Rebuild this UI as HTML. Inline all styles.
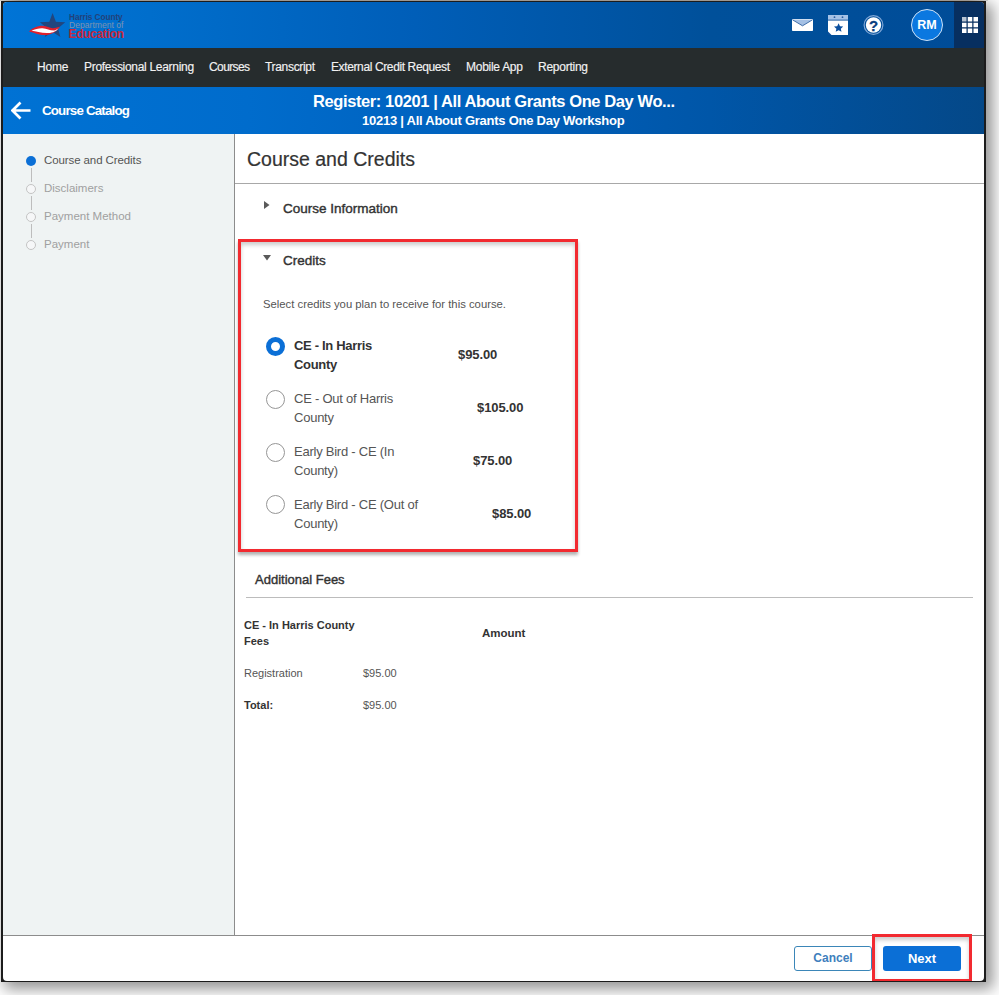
<!DOCTYPE html>
<html><head><meta charset="utf-8">
<style>
*{margin:0;padding:0;box-sizing:border-box}
html,body{width:999px;height:995px;overflow:hidden;background:#fff;font-family:"Liberation Sans",sans-serif}
#frame{position:absolute;left:1px;top:1px;width:985px;height:981px;background:#1c1c1c;box-shadow:5px 5px 14px 2px rgba(0,0,0,.42)}
#clip{position:absolute;left:3px;top:2px;width:981px;height:979px;border-radius:4px;overflow:hidden;background:#fff}
#inner{position:absolute;left:-3px;top:-2px;width:999px;height:995px}
.a{position:absolute}
.t{position:absolute;white-space:nowrap;line-height:1}
#hdr{left:3px;top:2px;width:981px;height:46px;background:linear-gradient(to right,#0074d6 0%,#006ecc 15%,#005eb8 42%,#00509a 72%,#004c98 100%)}
#apps{left:954px;top:2px;width:30px;height:46px;background:#072f60}
#nav{left:3px;top:48px;width:981px;height:39px;background:#262c2d}
.nav{top:61px;font-size:12px;color:#f2f2f2;-webkit-text-stroke:0.15px #f2f2f2}
#bar{left:3px;top:87px;width:981px;height:47px;background:linear-gradient(to right,#0072d4 0%,#006ccc 25%,#0060bc 50%,#0056a8 72%,#044888 100%)}
#side{left:3px;top:134px;width:232px;height:801px;background:#eff3f3;border-right:1px solid #8c8c8c}
.step{font-size:11.5px;color:#a0a0a0}
.dot{width:10px;height:10px;border-radius:50%;border:1px solid #c4c4c4;background:#f6f7f8;left:26px}
.vl{left:31px;width:1px;background:#bdbdbd}
.radio{width:19px;height:19px;border-radius:50%;border:1px solid #969696;left:266px;background:#fff}
.lbl{font-size:13px;color:#555;line-height:19px;letter-spacing:-0.24px}
.price{font-size:13px;font-weight:bold;color:#333;letter-spacing:-0.1px}
</style></head><body>
<div class="a" style="left:0;top:0;width:988px;height:1px;background:linear-gradient(to right,#d8d4d0,#b8b0a8 2%,#b8b0a8 98%,#e0e0e0)"></div>
<div id="frame"></div>
<div id="clip"><div id="inner">

<!-- header -->
<div id="hdr" class="a"></div>
<div id="apps" class="a"></div>
<svg class="a" style="left:962px;top:17px" width="16" height="16" viewBox="0 0 16 16">
  <g fill="#fff"><rect x="0" y="0" width="4.5" height="4.5" fill="#b8c4d2"/><rect x="5.75" y="0" width="4.5" height="4.5"/><rect x="11.5" y="0" width="4.5" height="4.5"/>
  <rect x="0" y="5.75" width="4.5" height="4.5"/><rect x="5.75" y="5.75" width="4.5" height="4.5"/><rect x="11.5" y="5.75" width="4.5" height="4.5"/>
  <rect x="0" y="11.5" width="4.5" height="4.5"/><rect x="5.75" y="11.5" width="4.5" height="4.5"/><rect x="11.5" y="11.5" width="4.5" height="4.5"/></g>
</svg>
<!-- avatar -->
<div class="a" style="left:911px;top:9px;width:32px;height:32px;border-radius:50%;background:#0b78e0;border:1.5px solid #cfe3f7"></div>
<div class="t" style="left:916px;top:19px;width:22px;text-align:center;font-size:12.5px;font-weight:bold;color:#fff">RM</div>
<!-- mail -->
<svg class="a" style="left:792px;top:19px" width="21" height="12" viewBox="0 0 21 12">
  <rect x="0" y="0" width="21" height="12" rx="0.8" fill="#fff"/>
  <path d="M0.5 0.5 L20.5 0.5 L10.5 6.8 Z" fill="#a4c0e4"/>
  <path d="M0.5 0.8 L10.5 6.8 L20.5 0.8" fill="none" stroke="#2a5d9f" stroke-width="0.9"/>
</svg>
<!-- calendar -->
<svg class="a" style="left:828px;top:15px" width="20" height="20" viewBox="0 0 20 20">
  <rect x="0" y="0" width="20" height="4.8" fill="#a6c2e6"/>
  <rect x="0" y="4.8" width="20" height="0.8" fill="#3a6aa8"/>
  <rect x="0" y="5.6" width="20" height="14.4" fill="#fff"/>
  <circle cx="6.5" cy="2.2" r="0.9" fill="#2a5d9f"/><circle cx="14.5" cy="2.2" r="0.9" fill="#2a5d9f"/>
  <path d="M10.6 8.3 L12 11.3 L15.2 11.6 L12.8 13.7 L13.5 16.8 L10.6 15.2 L7.7 16.8 L8.4 13.7 L6 11.6 L9.2 11.3 Z" fill="#0b4f9e"/>
  <path d="M0 16.5 L3.5 20 L0 20 Z" fill="#0a4e9a"/>
</svg>
<!-- help -->
<svg class="a" style="left:863px;top:15px" width="21" height="21" viewBox="0 0 21 21">
  <circle cx="10.5" cy="10" r="9.4" fill="none" stroke="#7ea6d6" stroke-width="1.2"/>
  <circle cx="10.5" cy="10" r="7.7" fill="#fff"/>
</svg>
<div class="t" style="left:867.5px;top:17.5px;width:12px;text-align:center;font-size:15px;font-weight:bold;color:#0b3f80;-webkit-text-stroke:0.3px #0b3f80">?</div>
<!-- logo -->
<svg class="a" style="left:25px;top:8px" width="50" height="34" viewBox="0 0 50 34">
  <path d="M27.6 5 L30.9 13.8 L40.3 14.2 L33.0 20.2 L35.4 29.1 L27.6 24.0 L19.8 29.1 L22.2 20.2 L14.9 14.2 L24.3 13.8 Z" fill="#21467e"/>
  <path d="M4 23.4 C7 20.5 12 17.8 17.5 17.8 C22 17.8 25 20.5 28 20.3 C31 20 33 19.2 35 18.8 C32 23 28 26.5 21 27 C14 27.3 9 24.5 4 23.4 Z" fill="#e0202c"/>
  <path d="M6.5 22.8 C10 21 14 20 17.5 20.2 C22 20.4 25 22.6 29 22.4 C31 22.2 32.5 21 33.5 20.2 C31.5 23 28.5 24.8 23 25 C16 25.2 11 23.2 6.5 22.8 Z" fill="#fff"/>
</svg>
<div class="t" style="left:69px;top:13px;font-size:8.3px;font-weight:bold;color:#22427a;letter-spacing:-0.1px">Harris County</div>
<div class="t" style="left:69px;top:20.5px;font-size:8.6px;color:#7d93b0;letter-spacing:0px">Department of</div>
<div class="t" style="left:68.5px;top:28px;font-size:12px;font-weight:bold;color:#c8283c;letter-spacing:-0.3px">Education</div>

<!-- nav -->
<div id="nav" class="a"></div>
<div class="t nav" style="left:37px;letter-spacing:-0.2px">Home</div>
<div class="t nav" style="left:84px;letter-spacing:-0.3px">Professional Learning</div>
<div class="t nav" style="left:209px;letter-spacing:-0.6px">Courses</div>
<div class="t nav" style="left:265px;letter-spacing:-0.32px">Transcript</div>
<div class="t nav" style="left:331px;letter-spacing:-0.38px">External Credit Request</div>
<div class="t nav" style="left:466px;letter-spacing:-0.27px">Mobile App</div>
<div class="t nav" style="left:538px;letter-spacing:-0.25px">Reporting</div>

<!-- bar -->
<div id="bar" class="a"></div>
<svg class="a" style="left:11px;top:101px" width="20" height="19" viewBox="0 0 20 19">
  <path d="M19.5 9.5 L2 9.5 M9.5 1.5 L1.5 9.5 L9.5 17.5" fill="none" stroke="#fff" stroke-width="2.7"/>
</svg>
<div class="t" style="left:42px;top:104px;font-size:13.3px;font-weight:bold;color:#fff;letter-spacing:-0.8px">Course Catalog</div>
<div class="t" style="left:313px;top:93px;font-size:16.5px;font-weight:bold;color:#fff;letter-spacing:-0.4px">Register: 10201 | All About Grants One Day Wo...</div>
<div class="t" style="left:362px;top:113.5px;font-size:13px;font-weight:bold;color:#fff;letter-spacing:-0.25px">10213 | All About Grants One Day Workshop</div>

<!-- sidebar -->
<div id="side" class="a"></div>
<div class="a" style="left:26px;top:156px;width:10px;height:10px;border-radius:50%;background:#0b6fd6"></div>
<div class="a vl" style="top:168px;height:14px"></div>
<div class="a dot" style="top:184px"></div>
<div class="a vl" style="top:196px;height:14px"></div>
<div class="a dot" style="top:212px"></div>
<div class="a vl" style="top:224px;height:14px"></div>
<div class="a dot" style="top:240px"></div>
<div class="t step" style="left:44px;top:154.5px;color:#555;letter-spacing:-0.1px">Course and Credits</div>
<div class="t step" style="left:44px;top:182.5px">Disclaimers</div>
<div class="t step" style="left:44px;top:210.5px">Payment Method</div>
<div class="t step" style="left:44px;top:238.5px">Payment</div>

<!-- content -->
<div class="t" style="left:247px;top:150px;font-size:19.5px;color:#333;-webkit-text-stroke:0.2px #333">Course and Credits</div>
<div class="a" style="left:235px;top:183px;width:749px;height:1px;background:#a8a8a8"></div>

<svg class="a" style="left:264px;top:201px" width="6" height="8" viewBox="0 0 6 8"><path d="M0 0 L5.5 4 L0 8 Z" fill="#5a5a5a"/></svg>
<div class="t" style="left:283px;top:202px;font-size:13.5px;color:#333;-webkit-text-stroke:0.4px #333">Course Information</div>

<svg class="a" style="left:263px;top:255px" width="8" height="6" viewBox="0 0 8 6"><path d="M0 0 L8 0 L4 5.5 Z" fill="#5a5a5a"/></svg>
<div class="t" style="left:283px;top:254px;font-size:13.5px;color:#333;-webkit-text-stroke:0.4px #333">Credits</div>
<div class="t" style="left:263px;top:299px;font-size:11.3px;color:#555">Select credits you plan to receive for this course.</div>

<div class="a" style="left:266px;top:337px;width:19px;height:19px;border-radius:50%;border:5px solid #0b6fd6;background:#fff"></div>
<div class="t lbl" style="left:294px;top:335.5px;font-weight:bold;color:#333;font-size:13px;letter-spacing:-0.31px">CE - In Harris<br>County</div>
<div class="t price" style="left:458px;top:347.5px">$95.00</div>

<div class="a radio" style="top:390px"></div>
<div class="t lbl" style="left:294px;top:388.5px">CE - Out of Harris<br>County</div>
<div class="t price" style="left:477px;top:400.5px">$105.00</div>

<div class="a radio" style="top:443px"></div>
<div class="t lbl" style="left:294px;top:441.5px">Early Bird - CE (In<br>County)</div>
<div class="t price" style="left:473px;top:454px">$75.00</div>

<div class="a radio" style="top:495px"></div>
<div class="t lbl" style="left:294px;top:494.5px">Early Bird - CE (Out of<br>County)</div>
<div class="t price" style="left:492px;top:507px">$85.00</div>

<!-- red box -->
<div class="a" style="left:238px;top:239px;width:340px;height:313px;border:3px solid #f22a30;box-shadow:0 3px 3px rgba(0,0,0,.3),inset 0 3px 4px rgba(0,0,0,.2)"></div>

<div class="t" style="left:255px;top:573px;font-size:13px;color:#333;-webkit-text-stroke:0.4px #333">Additional Fees</div>
<div class="a" style="left:246px;top:597px;width:727px;height:1px;background:#bcbcbc"></div>

<div class="t" style="left:244px;top:617px;font-size:11px;font-weight:bold;color:#333;line-height:16px">CE - In Harris County<br>Fees</div>
<div class="t" style="left:482px;top:628px;font-size:11.5px;font-weight:bold;color:#333">Amount</div>
<div class="t" style="left:244px;top:668px;font-size:11px;color:#555">Registration</div>
<div class="t" style="left:363px;top:668px;font-size:11px;color:#555">$95.00</div>
<div class="t" style="left:244px;top:700px;font-size:11px;font-weight:bold;color:#333">Total:</div>
<div class="t" style="left:363px;top:700px;font-size:11px;color:#555">$95.00</div>

<!-- footer -->
<div class="a" style="left:3px;top:935px;width:981px;height:1px;background:#8c8c8c"></div>
<div class="a" style="left:794px;top:946px;width:78px;height:25px;border:1px solid #3b86b8;border-radius:3px;background:#fff"></div>
<div class="t" style="left:794px;top:952px;width:78px;text-align:center;font-size:12px;font-weight:bold;color:#3f7fbd">Cancel</div>
<div class="a" style="left:883px;top:946px;width:78px;height:25px;border-radius:3px;background:#0b6fd6"></div>
<div class="t" style="left:883px;top:952px;width:78px;text-align:center;font-size:13px;font-weight:bold;color:#fff">Next</div>
<div class="a" style="left:872px;top:934px;width:100px;height:48px;border:3px solid #f22a30;box-shadow:inset 0 3px 4px rgba(0,0,0,.2)"></div>
</div></div>
</body></html>
